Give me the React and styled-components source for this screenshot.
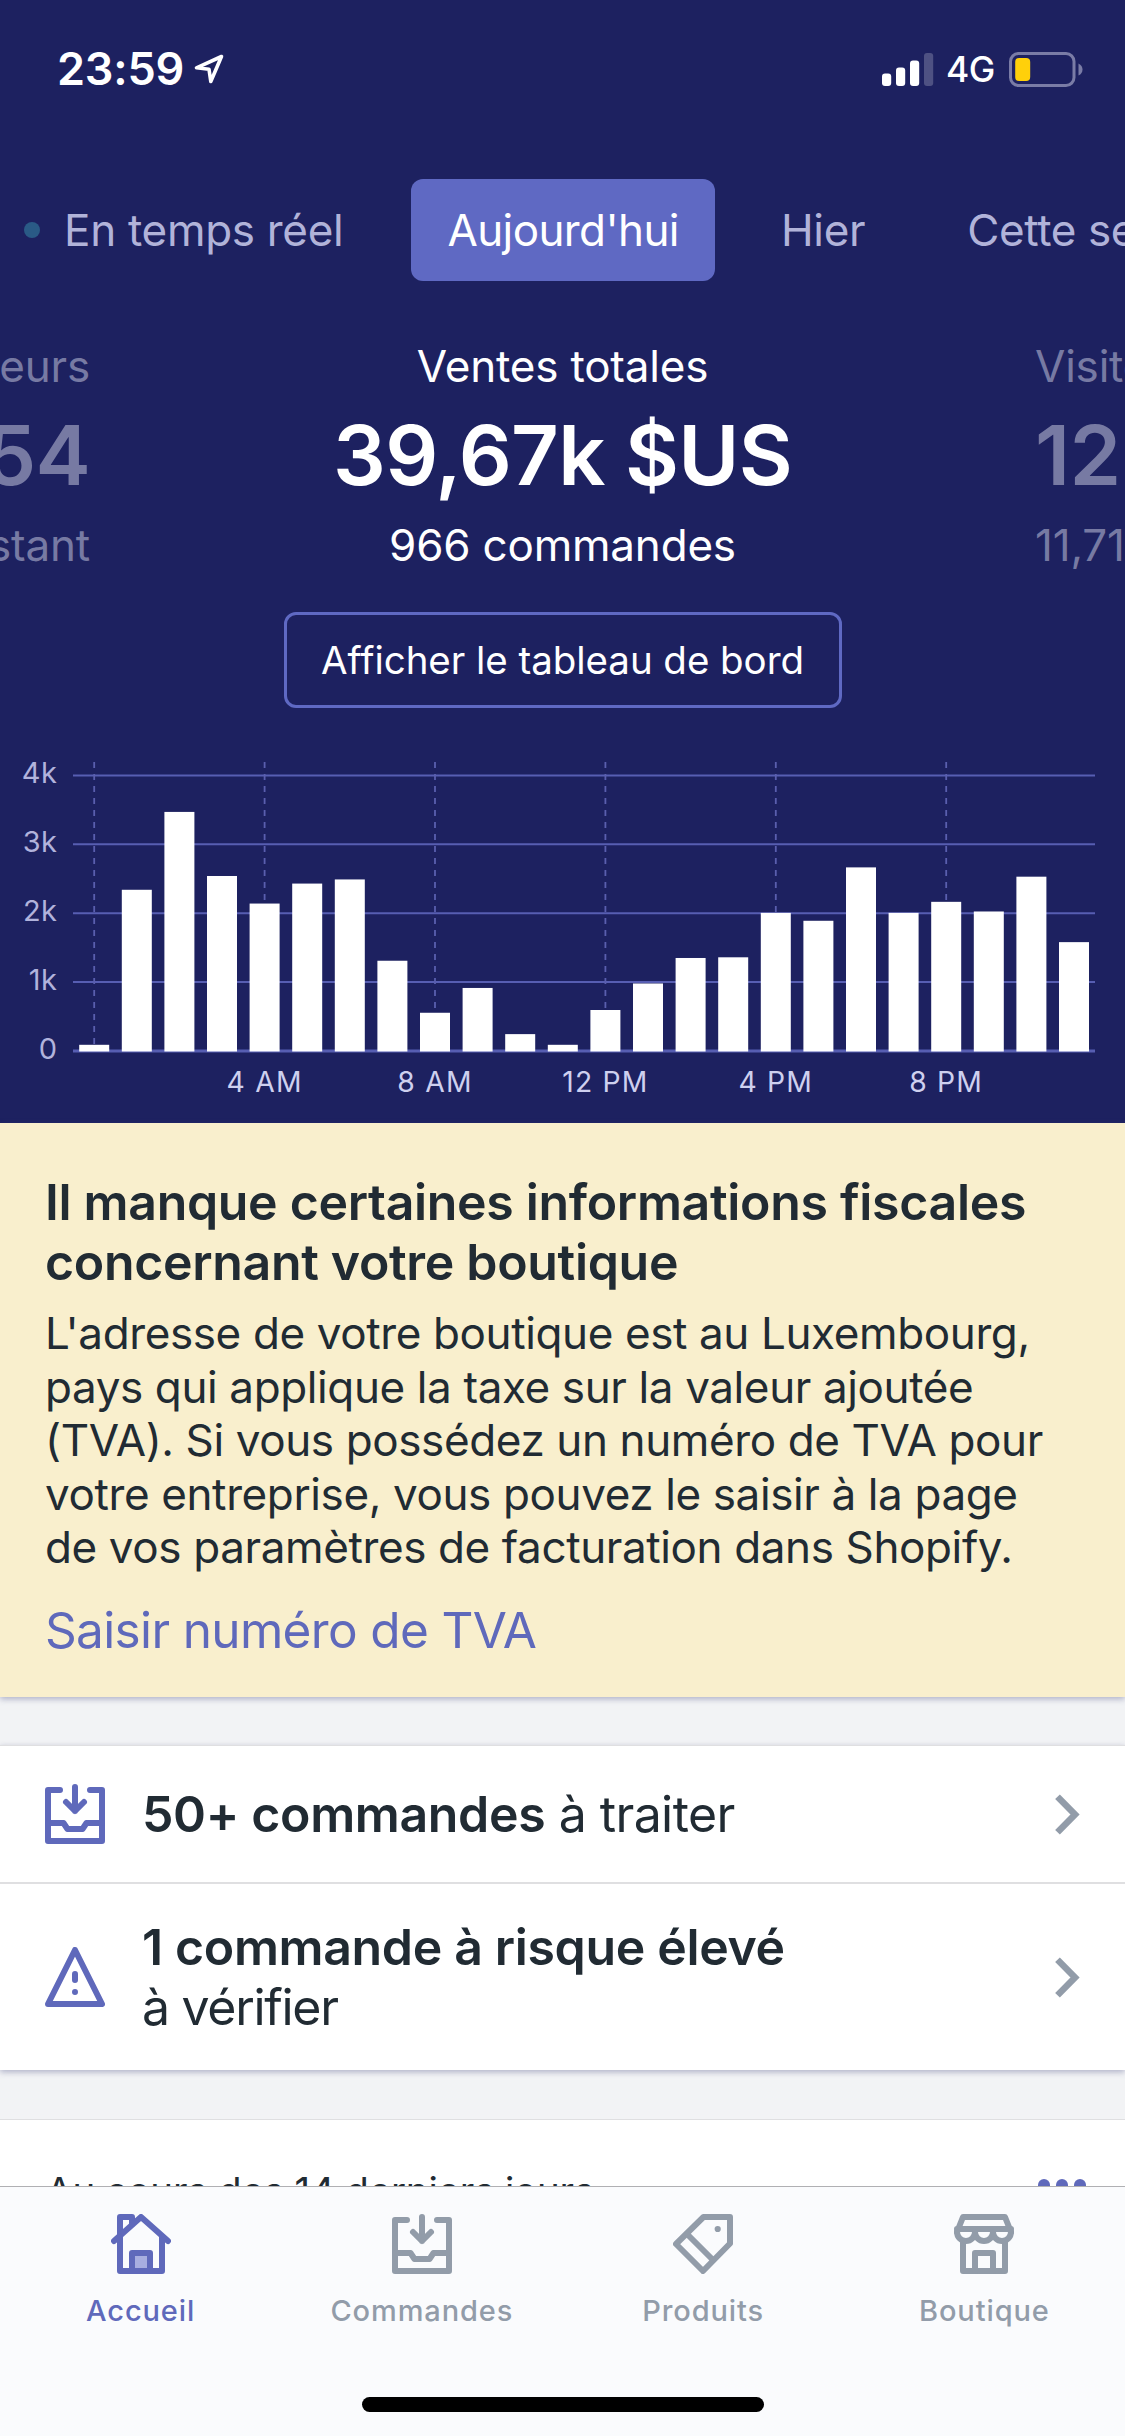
import React from 'react';
import styled, { createGlobalStyle, css } from 'styled-components';

const palette = {
  navy: '#1d2160',
  indigo: '#5f69c3',
  indigoIcon: '#5f69bb',
  indigoLight: '#a8aee0',
  lavender: '#b1b3d9',
  yellow: '#f9efcd',
  ink: '#212b33',
  sky: '#f2f3f5',
  border: '#dfdfe1',
  slate: '#929ca9',
};

const GlobalStyle = createGlobalStyle`
  * {
    box-sizing: border-box;
  }
  body {
    margin: 0;
    background: ${palette.sky};
    font-family: Inter, 'Liberation Sans', sans-serif;
    color: ${palette.ink};
  }
`;

const Screen = styled.div`
  display: flex;
  flex-direction: column;
  width: 1125px;
  height: 2436px;
  overflow: hidden;
  background: ${palette.sky};
`;

const Header = styled.header`
  display: flex;
  flex-direction: column;
  flex-shrink: 0;
  height: 1123px;
  color: #fff;
  background: ${palette.navy};
`;

/* status bar */

const StatusBar = styled.div`
  display: flex;
  align-items: center;
  justify-content: space-between;
  height: 138px;
  padding: 0 42px 0 57px;
`;

const StatusGroup = styled.div`
  display: flex;
  align-items: center;
`;

const Clock = styled.span`
  margin-right: 10px;
  font-size: 45px;
  font-weight: 600;
  line-height: 54px;
  letter-spacing: -0.2px;
`;

const Network = styled.span`
  margin: 2px 14px 0 12px;
  font-size: 35.5px;
  font-weight: 500;
  line-height: 44px;
  letter-spacing: -0.4px;
`;

/* period tabs */

const Tabs = styled.nav`
  display: flex;
  gap: 30px;
  flex-shrink: 0;
  height: 102px;
  margin-top: 41px;
  overflow: hidden;
`;

const Tab = styled.div`
  display: flex;
  align-items: center;
  flex-shrink: 0;
  padding: 0 36px;
  border-radius: 12px;
  font-size: 44px;
  letter-spacing: ${props => props.$spacing || 0}px;
  white-space: nowrap;
  color: ${palette.lavender};

  &:first-child {
    padding: 0 38px 0 24px;
  }

  ${props =>
    props.$active &&
    css`
      color: #fff;
      background: ${palette.indigo};
    `}
`;

const LiveDot = styled.span`
  width: 16px;
  height: 16px;
  margin-right: 24px;
  border-radius: 50%;
  background: #2a5a86;
`;

/* metrics carousel */

const Metrics = styled.section`
  display: grid;
  grid-template-columns: 90px 1fr 90px;
  flex-shrink: 0;
  margin-top: 55px;
  overflow: hidden;
`;

const Metric = styled.div`
  display: flex;
  flex-direction: column;
  align-items: ${props => props.$align || 'center'};
  min-width: 0;
  white-space: nowrap;
  color: ${props => (props.$faded ? '#777aa3' : '#fff')};
`;

const MetricLabel = styled.div`
  font-size: 44px;
  line-height: 60px;
  letter-spacing: -0.2px;
`;

const MetricValue = styled.div`
  font-size: 83px;
  font-weight: 600;
  line-height: 119px;
  letter-spacing: -0.7px;
`;

const DashboardButton = styled.button`
  align-self: center;
  flex-shrink: 0;
  width: 558px;
  height: 96px;
  margin-top: 37px;
  padding: 0;
  border: 3px solid ${palette.indigo};
  border-radius: 12px;
  font: 400 38.5px Inter, 'Liberation Sans', sans-serif;
  letter-spacing: -0.05px;
  color: #fff;
  background: transparent;
`;

const ChartSvg = styled.svg`
  display: block;
  flex-shrink: 0;
  font-size: 29px;
`;

/* tax banner */

const Banner = styled.section`
  flex-shrink: 0;
  height: 574px;
  padding: 49px 40px 0 45px;
  background: ${palette.yellow};
  box-shadow: 0 2px 6px rgba(70, 75, 130, 0.4);
`;

const BannerTitle = styled.h2`
  margin: 0;
  font-size: 50px;
  font-weight: 600;
  line-height: 60px;
  letter-spacing: -0.32px;
`;

const BannerText = styled.p`
  margin: 15px 0 0;
  font-size: 44px;
  line-height: 53.6px;
  letter-spacing: -0.38px;
`;

const Line = styled.span`
  display: block;
  white-space: nowrap;
`;

const BannerLink = styled.a`
  display: block;
  margin-top: 25px;
  font-size: 49.5px;
  line-height: 60px;
  letter-spacing: -0.65px;
  color: ${palette.indigoIcon};
`;

/* cards */

const Card = styled.section`
  flex-shrink: 0;
  margin-top: 48px;
  border-top: 1px solid ${palette.border};
  background: #fff;
  box-shadow: 0 2px 6px rgba(70, 75, 130, 0.4);
`;

const TaskRow = styled.div`
  display: flex;
  align-items: center;
  height: ${props => props.$height}px;
  padding: 0 45px;

  & + & {
    border-top: 2px solid ${palette.border};
  }
`;

const TaskText = styled.div`
  flex: 1;
  margin-left: 37px;
  font-size: 50px;
  line-height: 60px;
  letter-spacing: ${props => props.$spacing}px;

  strong {
    font-weight: 600;
    letter-spacing: -0.35px;
  }
`;

const ReportCard = styled.section`
  display: flex;
  align-items: flex-start;
  justify-content: space-between;
  flex-shrink: 0;
  height: 67px;
  margin-top: 49px;
  padding: 41px 39px 0 46px;
  border-top: 1px solid ${palette.border};
  font-size: 38.5px;
  line-height: 60px;
  letter-spacing: -0.18px;
  overflow: hidden;
  background: #fff;
`;

const MoreDots = styled.div`
  display: flex;
  gap: 6px;
  padding-top: 18px;

  span {
    width: 12px;
    height: 12px;
    border-radius: 50%;
    background: ${palette.indigoIcon};
  }
`;

/* bottom bar */

const TabBar = styled.footer`
  flex: 1;
  display: flex;
  flex-direction: column;
  align-items: center;
  border-top: 1px solid #b0b0b3;
  background: #fafbfd;
`;

const TabBarItems = styled.div`
  display: grid;
  grid-template-columns: repeat(4, 1fr);
  align-self: stretch;
  height: 210px;
  padding-top: 27px;
`;

const TabBarItem = styled.div`
  display: flex;
  flex-direction: column;
  align-items: center;
  gap: 17px;
  font-size: 29px;
  font-weight: 500;
  line-height: 40px;
  letter-spacing: 0.9px;
  color: ${props => (props.$active ? palette.indigoIcon : palette.slate)};
`;

const HomeIndicator = styled.div`
  width: 402px;
  height: 15px;
  border-radius: 8px;
  background: #000;
`;

const Glyph = ({ children }) => (
  <svg
    width="60"
    height="60"
    viewBox="0 0 60 60"
    fill="none"
    stroke="currentColor"
    strokeWidth="6"
    strokeLinecap="round"
    strokeLinejoin="round"
  >
    {children}
  </svg>
);

const IndigoGlyph = styled.div`
  display: flex;
  color: ${palette.indigoIcon};
`;

const InboxIcon = () => (
  <Glyph>
    <path d="M15 6H3V57H57V6H45" />
    <path d="M30 3V27M21 18L30 27L39 18" />
    <path d="M3 39H18.5L22.5 45H37.5L41.5 39H57" />
  </Glyph>
);

const WarningIcon = () => (
  <Glyph>
    <path d="M30 3L57 57H3Z" />
    <path d="M30 27V33M30 45V45.1" />
  </Glyph>
);

const HomeIcon = () => (
  <Glyph>
    <path d="M21 39H39V57H21Z" fill={palette.indigoLight} />
    <path d="M9 24V3H21V10" />
    <path d="M3 27L30 3L57 27" />
    <path d="M9 23V57H51V23" />
  </Glyph>
);

const TagIcon = () => (
  <Glyph>
    <path d="M30.5 3H57V29.5L30 57L3 30Z" />
    <path d="M14 20L40 46" />
    <circle cx="44.7" cy="15" r="3.1" fill="currentColor" stroke="none" />
  </Glyph>
);

const StoreIcon = () => (
  <Glyph>
    <path d="M3 18L9 3H51L57 18" />
    <path d="M3 15H57" />
    <path d="M3 18a9 9 0 0 0 18 0a9 9 0 0 0 18 0a9 9 0 0 0 18 0" />
    <path d="M9 27V57H51V27" />
    <path d="M21 57V39H39V57" />
  </Glyph>
);

const Chevron = () => (
  <svg width="25" height="41" viewBox="0 0 25 41" fill="none">
    <path d="M2.5 2.8L20 20.5L2.5 38.2" stroke={palette.slate} strokeWidth="6.6" />
  </svg>
);

const LocationArrow = () => (
  <svg width="30" height="30" viewBox="0 0 30 30" fill="none">
    <path
      d="M27.5 2.5L2.5 13.8L15 15.2L16.8 27.5Z"
      stroke="#fff"
      strokeWidth="3.6"
      strokeLinejoin="round"
    />
  </svg>
);

const SignalBars = () => (
  <svg width="52" height="33" viewBox="0 0 52 33" fill="#fff">
    <rect x="0" y="20.5" width="9.2" height="12.5" rx="3" />
    <rect x="14" y="14.5" width="9.2" height="18.5" rx="3" />
    <rect x="28" y="7.5" width="9.2" height="25.5" rx="3" />
    <rect x="42" y="0" width="9.2" height="33" rx="3" opacity="0.22" />
  </svg>
);

const Battery = () => (
  <svg width="74" height="35" viewBox="0 0 74 35">
    <rect x="1.5" y="1.5" width="63.5" height="32" rx="8" fill="none" stroke="#7a7ca6" strokeWidth="3" />
    <rect x="6.2" y="6" width="15" height="23" rx="4" fill="#ffd00a" />
    <path d="M69.5 11.5Q73.5 13.5 73.5 17.5T69.5 23.5Z" fill="#7a7ca6" />
  </svg>
);

/* hourly sales, in dollars */
const sales = [
  90, 2340, 3470, 2540, 2140, 2430, 2490, 1310, 555, 915, 245, 90,
  595, 980, 1350, 1360, 2005, 1890, 2665, 2005, 2165, 2025, 2530, 1580,
];
const hours = ['', '4 AM', '8 AM', '12 PM', '4 PM', '8 PM'];
const baseline = 343;
const unit = 68.9;
const step = 42.6;
const firstHour = 94.2;

const SalesChart = () => (
  <ChartSvg width="1125" height="415" viewBox="0 0 1125 415">
    {[0, 1, 2, 3, 4].map(level => {
      const y = baseline - level * unit;
      return (
        <g key={level}>
          <line
            x1="73"
            x2="1095"
            y1={y}
            y2={y}
            stroke="#575eb2"
            strokeWidth={level ? 2 : 3}
          />
          <text x="57.5" y={y + 7.8} textAnchor="end" fill="#b1b3dc" letterSpacing="0.5">
            {level ? `${level}k` : '0'}
          </text>
        </g>
      );
    })}
    {hours.map((hour, i) => {
      const x = firstHour + i * 4 * step;
      return (
        <g key={i}>
          <line x1={x} x2={x} y1="54" y2={baseline} stroke="#5a5fae" strokeWidth="1.8" strokeDasharray="6 6" />
          <text x={x} y="383.7" textAnchor="middle" fill="#ced0ef" fontSize="28.3" letterSpacing="1.2">
            {hour}
          </text>
        </g>
      );
    })}
    {sales.map((value, i) => {
      const height = (value / 1000) * unit;
      return (
        <rect
          key={i}
          x={firstHour - 15 + i * step}
          y={baseline - height}
          width="30"
          height={height + 0.5}
          fill="#fff"
        />
      );
    })}
  </ChartSvg>
);

const App = () => {
  return (
    <>
      <GlobalStyle />
      <Screen>
        <Header>
          <StatusBar>
            <StatusGroup>
              <Clock>23:59</Clock>
              <LocationArrow />
            </StatusGroup>
            <StatusGroup>
              <SignalBars />
              <Network>4G</Network>
              <Battery />
            </StatusGroup>
          </StatusBar>

          <Tabs>
            <Tab $spacing={-0.3}>
              <LiveDot />
              En temps réel
            </Tab>
            <Tab $active $spacing={-0.6}>
              Aujourd'hui
            </Tab>
            <Tab $spacing={-0.3}>Hier</Tab>
            <Tab $spacing={-0.4}>Cette semaine</Tab>
          </Tabs>

          <Metrics>
            <Metric $faded $align="flex-end">
              <MetricLabel>Visiteurs</MetricLabel>
              <MetricValue>54</MetricValue>
              <MetricLabel>à l'instant</MetricLabel>
            </Metric>
            <Metric>
              <MetricLabel>Ventes totales</MetricLabel>
              <MetricValue>39,67k $US</MetricValue>
              <MetricLabel>966 commandes</MetricLabel>
            </Metric>
            <Metric $faded $align="flex-start">
              <MetricLabel>Visiteurs</MetricLabel>
              <MetricValue>12</MetricValue>
              <MetricLabel>11,71</MetricLabel>
            </Metric>
          </Metrics>

          <DashboardButton>Afficher le tableau de bord</DashboardButton>
          <SalesChart />
        </Header>

        <Banner>
          <BannerTitle>
            <Line>Il manque certaines informations fiscales</Line>
            <Line>concernant votre boutique</Line>
          </BannerTitle>
          <BannerText>
            <Line>L'adresse de votre boutique est au Luxembourg,</Line>
            <Line>pays qui applique la taxe sur la valeur ajoutée</Line>
            <Line>(TVA). Si vous possédez un numéro de TVA pour</Line>
            <Line>votre entreprise, vous pouvez le saisir à la page</Line>
            <Line>de vos paramètres de facturation dans Shopify.</Line>
          </BannerText>
          <BannerLink>Saisir numéro de TVA</BannerLink>
        </Banner>

        <Card>
          <TaskRow $height={136}>
            <IndigoGlyph>
              <InboxIcon />
            </IndigoGlyph>
            <TaskText $spacing={-0.6}>
              <strong>50+ commandes</strong> à traiter
            </TaskText>
            <Chevron />
          </TaskRow>
          <TaskRow $height={188}>
            <IndigoGlyph>
              <WarningIcon />
            </IndigoGlyph>
            <TaskText $spacing={-1.3}>
              <strong>1 commande à risque élevé</strong>
              <br />à vérifier
            </TaskText>
            <Chevron />
          </TaskRow>
        </Card>

        <ReportCard>
          <span>Au cours des 14 derniers jours</span>
          <MoreDots>
            <span />
            <span />
            <span />
          </MoreDots>
        </ReportCard>

        <TabBar>
          <TabBarItems>
            <TabBarItem $active>
              <HomeIcon />
              Accueil
            </TabBarItem>
            <TabBarItem>
              <InboxIcon />
              Commandes
            </TabBarItem>
            <TabBarItem>
              <TagIcon />
              Produits
            </TabBarItem>
            <TabBarItem>
              <StoreIcon />
              Boutique
            </TabBarItem>
          </TabBarItems>
          <HomeIndicator />
        </TabBar>
      </Screen>
    </>
  );
};

export default App;
